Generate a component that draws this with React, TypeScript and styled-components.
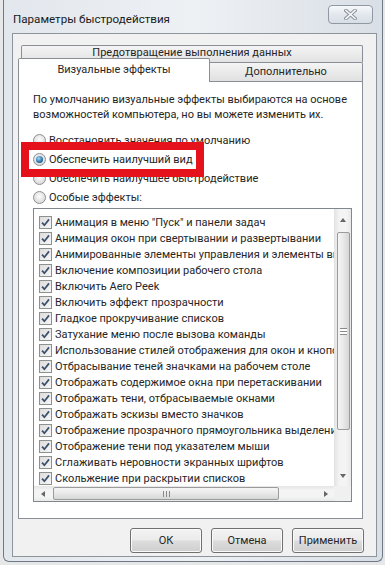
import styled, { createGlobalStyle } from "styled-components";

const GlobalStyle = createGlobalStyle`
  html, body {
    margin: 0;
    padding: 0;
  }
  body {
    width: 385px;
    height: 565px;
    overflow: hidden;
    background: #e6e7e9;
    font-family: "Segoe UI", Roboto, "Liberation Sans", sans-serif;
    font-size: 11px;
    color: #262626;
  }
`;

const effects = [
  'Анимация в меню "Пуск" и панели задач',
  "Анимация окон при свертывании и развертывании",
  "Анимированные элементы управления и элементы внутри окна",
  "Включение композиции рабочего стола",
  "Включить Aero Peek",
  "Включить эффект прозрачности",
  "Гладкое прокручивание списков",
  "Затухание меню после вызова команды",
  "Использование стилей отображения для окон и кнопок",
  "Отбрасывание теней значками на рабочем столе",
  "Отображать содержимое окна при перетаскивании",
  "Отображать тени, отбрасываемые окнами",
  "Отображать эскизы вместо значков",
  "Отображение прозрачного прямоугольника выделения",
  "Отображение тени под указателем мыши",
  "Сглаживать неровности экранных шрифтов",
  "Скольжение при раскрытии списков",
];

const radios = [
  { label: "Восстановить значения по умолчанию", checked: false },
  { label: "Обеспечить наилучший вид", checked: true },
  { label: "Обеспечить наилучшее быстродействие", checked: false },
  { label: "Особые эффекты:", checked: false },
];

const CloseIcon = () => (
  <svg width="13" height="11" viewBox="0 0 13 11">
    <path d="M2 1.5 L11 9.5 M11 1.5 L2 9.5" stroke="#8d939b" strokeWidth="3.6" strokeLinecap="square" />
    <path d="M2 1.5 L11 9.5 M11 1.5 L2 9.5" stroke="#f7f8fa" strokeWidth="1.6" strokeLinecap="square" />
  </svg>
);

const CheckMark = () => (
  <svg width="9" height="9" viewBox="0 0 9 9">
    <path d="M1 4.6 L3.4 7.2 L8 1.4" stroke="#3d4f6b" strokeWidth="1.7" fill="none" />
  </svg>
);

const App = () => {
  return (
    <>
      <GlobalStyle />
      <Window>
        <TitleBar>
          <Title>Параметры быстродействия</Title>
          <CloseButton>
            <CloseIcon />
          </CloseButton>
        </TitleBar>
        <Client>
          <BackRow>
            <BackTab>Предотвращение выполнения данных</BackTab>
          </BackRow>
          <FrontRow>
            <SelectedTab>Визуальные эффекты</SelectedTab>
            <Tab>Дополнительно</Tab>
          </FrontRow>
          <Panel>
            <Description>
              По умолчанию визуальные эффекты выбираются на основе
              <br />
              возможностей компьютера, но вы можете изменить их.
            </Description>
            <RadioGroup>
              {radios.map((r) => (
                <RadioRow key={r.label} highlighted={r.checked}>
                  <RadioCircle>{r.checked ? <RadioDot /> : null}</RadioCircle>
                  <span>{r.label}</span>
                </RadioRow>
              ))}
            </RadioGroup>
            <ListBox>
              <Items>
                {effects.map((e) => (
                  <Item key={e}>
                    <CheckBox>
                      <CheckMark />
                    </CheckBox>
                    <span>{e}</span>
                  </Item>
                ))}
              </Items>
              <VScroll>
                <VButton>
                  <Arrow dir="up" />
                </VButton>
                <VTrack>
                  <VThumb>
                    <VGrip />
                  </VThumb>
                </VTrack>
                <VButton>
                  <Arrow dir="down" />
                </VButton>
              </VScroll>
              <HScroll>
                <HButton>
                  <Arrow dir="left" />
                </HButton>
                <HTrack>
                  <HThumb>
                    <HGrip />
                  </HThumb>
                </HTrack>
                <HButton>
                  <Arrow dir="right" />
                </HButton>
              </HScroll>
              <Corner />
            </ListBox>
          </Panel>
          <ButtonRow>
            <Button>ОК</Button>
            <Button>Отмена</Button>
            <Button>Применить</Button>
          </ButtonRow>
        </Client>
      </Window>
    </>
  );
};

export default App;

const Window = styled.div`
  margin-left: 3px;
  width: 380px;
  height: 562px;
  box-sizing: border-box;
  border: 1px solid #6f7883;
  border-top: none;
  border-radius: 0 0 6px 6px;
  background: linear-gradient(90deg, #e2e7ed, #eef1f4 50%, #d9dfe6);
  display: flex;
  flex-direction: column;
  padding: 0 5px 4px 8px;
`;

const TitleBar = styled.div`
  height: 33px;
  display: flex;
  justify-content: space-between;
  align-items: flex-start;
  flex-shrink: 0;
`;

const Title = styled.div`
  margin-top: 11px;
  padding-left: 1px;
  font-size: 11.6px;
  line-height: 16px;
  color: #1a1a1a;
`;

const CloseButton = styled.div`
  margin-top: 5px;
  margin-right: 4px;
  width: 45px;
  height: 19px;
  box-sizing: border-box;
  border: 1px solid #8f98a3;
  border-radius: 4px;
  background: linear-gradient(#f7f9fb, #e3e8ee 50%, #d8dee5);
  display: flex;
  align-items: center;
  justify-content: center;
`;

const Client = styled.div`
  flex: 1;
  display: flex;
  flex-direction: column;
  background: #f1f1f1;
  border: 1px solid #8d949c;
  padding: 11px 13px 0 5px;
`;

const BackRow = styled.div`
  display: flex;
  height: 17px;
  padding-left: 3px;
`;

const BackTab = styled.div`
  flex: 1;
  box-sizing: border-box;
  border: 1px solid #8a8e96;
  border-bottom: none;
  border-radius: 2px 2px 0 0;
  background: linear-gradient(#f4f4f4, #e2e2e2);
  text-align: center;
  line-height: 14px;
`;

const FrontRow = styled.div`
  display: flex;
  align-items: flex-start;
  margin-top: -4px;
  height: 24px;
  position: relative;
  z-index: 1;
`;

const SelectedTab = styled.div`
  width: 192px;
  height: 24px;
  box-sizing: border-box;
  border: 1px solid #8a8e96;
  border-bottom: none;
  border-radius: 2px 2px 0 0;
  background: #fff;
  text-align: center;
  line-height: 22px;
`;

const Tab = styled.div`
  flex: 1;
  margin-top: 4px;
  height: 19px;
  box-sizing: border-box;
  border: 1px solid #8a8e96;
  border-left: none;
  border-bottom: none;
  border-radius: 0 2px 0 0;
  background: linear-gradient(#f4f4f4, #e0e0e0);
  text-align: center;
  line-height: 18px;
`;

const Panel = styled.div`
  margin-top: -1px;
  height: 438px;
  box-sizing: border-box;
  flex-shrink: 0;
  background: #fff;
  border: 1px solid #8a8e96;
  padding: 10px 10px 0 14px;
`;

const Description = styled.div`
  line-height: 15px;
  white-space: nowrap;
`;

const RadioGroup = styled.div`
  margin-top: 9px;
  display: flex;
  flex-direction: column;
`;

const RadioRow = styled.div<{ highlighted?: boolean }>`
  height: 19px;
  display: flex;
  align-items: center;
  gap: 3px;
  ${({ highlighted }) =>
    highlighted
      ? `
    position: relative;
    z-index: 2;
    width: fit-content;
    margin-left: -4px;
    padding: 0 3px 0 4px;
    background: #fff;
    outline: 8px solid #e5121c;
  `
      : ""}
`;

const RadioCircle = styled.span`
  width: 13px;
  height: 13px;
  box-sizing: border-box;
  border-radius: 50%;
  border: 1px solid #8e8f8f;
  background: radial-gradient(circle at 50% 40%, #fdfdfd, #e3e3e3 55%, #cfcfcf);
  display: flex;
  align-items: center;
  justify-content: center;
  flex-shrink: 0;
`;

const RadioDot = styled.span`
  width: 7px;
  height: 7px;
  border-radius: 50%;
  background: radial-gradient(circle at 40% 35%, #a9dcf6, #2d78ad 55%, #0f3c5e);
`;

const ListBox = styled.div`
  margin-top: 1px;
  width: 319px;
  height: 294px;
  box-sizing: border-box;
  border: 1px solid #82878f;
  display: grid;
  grid-template-columns: 1fr 17px;
  grid-template-rows: 1fr 15px;
  background: #fff;
`;

const Items = styled.div`
  overflow: hidden;
  padding: 5px 0 0 5px;
`;

const Item = styled.div`
  height: 16px;
  display: flex;
  align-items: center;
  gap: 3px;
  white-space: nowrap;
`;

const CheckBox = styled.span`
  width: 13px;
  height: 13px;
  box-sizing: border-box;
  border: 1px solid #8e8f8f;
  background: linear-gradient(135deg, #dcdcdc, #f7f7f7);
  display: flex;
  align-items: center;
  justify-content: center;
  flex-shrink: 0;
`;

const VScroll = styled.div`
  display: flex;
  flex-direction: column;
  background: linear-gradient(90deg, #e6e6e6, #f4f4f4 30%, #f4f4f4 70%, #e9e9e9);
  border-left: 1px solid #e3e3e3;
`;

const VButton = styled.div`
  height: 21px;
  display: flex;
  align-items: center;
  justify-content: center;
  flex-shrink: 0;
`;

const VTrack = styled.div`
  flex: 1;
  padding: 2px 1px 0 2px;
`;

const VThumb = styled.div`
  height: 198px;
  box-sizing: border-box;
  border: 1px solid #9b9b9b;
  border-radius: 2px;
  background: linear-gradient(90deg, #f6f6f6, #e8e8e8 50%, #d6d6d6);
  display: flex;
  align-items: center;
  justify-content: center;
`;

const VGrip = styled.span`
  width: 7px;
  height: 5px;
  border-top: 1px solid #8a8a8a;
  border-bottom: 1px solid #8a8a8a;
  background: linear-gradient(#fff 0 40%, #8a8a8a 40% 60%, #fff 60%);
  background-size: 100% 5px;
`;

const HScroll = styled.div`
  display: flex;
  background: linear-gradient(#e6e6e6, #f4f4f4 30%, #f4f4f4 70%, #e9e9e9);
`;

const HButton = styled.div`
  width: 17px;
  display: flex;
  align-items: center;
  justify-content: center;
  flex-shrink: 0;
`;

const HTrack = styled.div`
  flex: 1;
  padding: 1px 0 1px 2px;
`;

const HThumb = styled.div`
  width: 226px;
  height: 100%;
  box-sizing: border-box;
  border: 1px solid #9b9b9b;
  border-radius: 2px;
  background: linear-gradient(#f6f6f6, #e8e8e8 50%, #d6d6d6);
  display: flex;
  align-items: center;
  justify-content: center;
`;

const HGrip = styled.span`
  width: 7px;
  height: 6px;
  background: linear-gradient(90deg, #8a8a8a 0 1px, transparent 1px 3px, #8a8a8a 3px 4px, transparent 4px 6px, #8a8a8a 6px 7px);
`;

const Corner = styled.div`
  background: #f0f0f0;
`;

const Arrow = styled.span<{ dir: "up" | "down" | "left" | "right" }>`
  width: 0;
  height: 0;
  border-style: solid;
  ${({ dir }) =>
    dir === "up"
      ? "border-width: 0 3.5px 4px 3.5px; border-color: transparent transparent #666 transparent;"
      : dir === "down"
      ? "border-width: 4px 3.5px 0 3.5px; border-color: #666 transparent transparent transparent;"
      : dir === "left"
      ? "border-width: 3.5px 4px 3.5px 0; border-color: transparent #666 transparent transparent;"
      : "border-width: 3.5px 0 3.5px 4px; border-color: transparent transparent transparent #666;"}
`;

const ButtonRow = styled.div`
  margin-top: 9px;
  display: flex;
  justify-content: flex-end;
  gap: 9px;
  margin-right: -1px;
`;

const Button = styled.div`
  width: 72px;
  height: 25px;
  box-sizing: border-box;
  border: 1px solid #707070;
  border-radius: 3px;
  background: linear-gradient(#f3f3f3, #ebebeb 48%, #dcdcdc 52%, #cfcfcf);
  box-shadow: inset 0 0 0 1px #fafafa;
  display: flex;
  align-items: center;
  justify-content: center;
`;
